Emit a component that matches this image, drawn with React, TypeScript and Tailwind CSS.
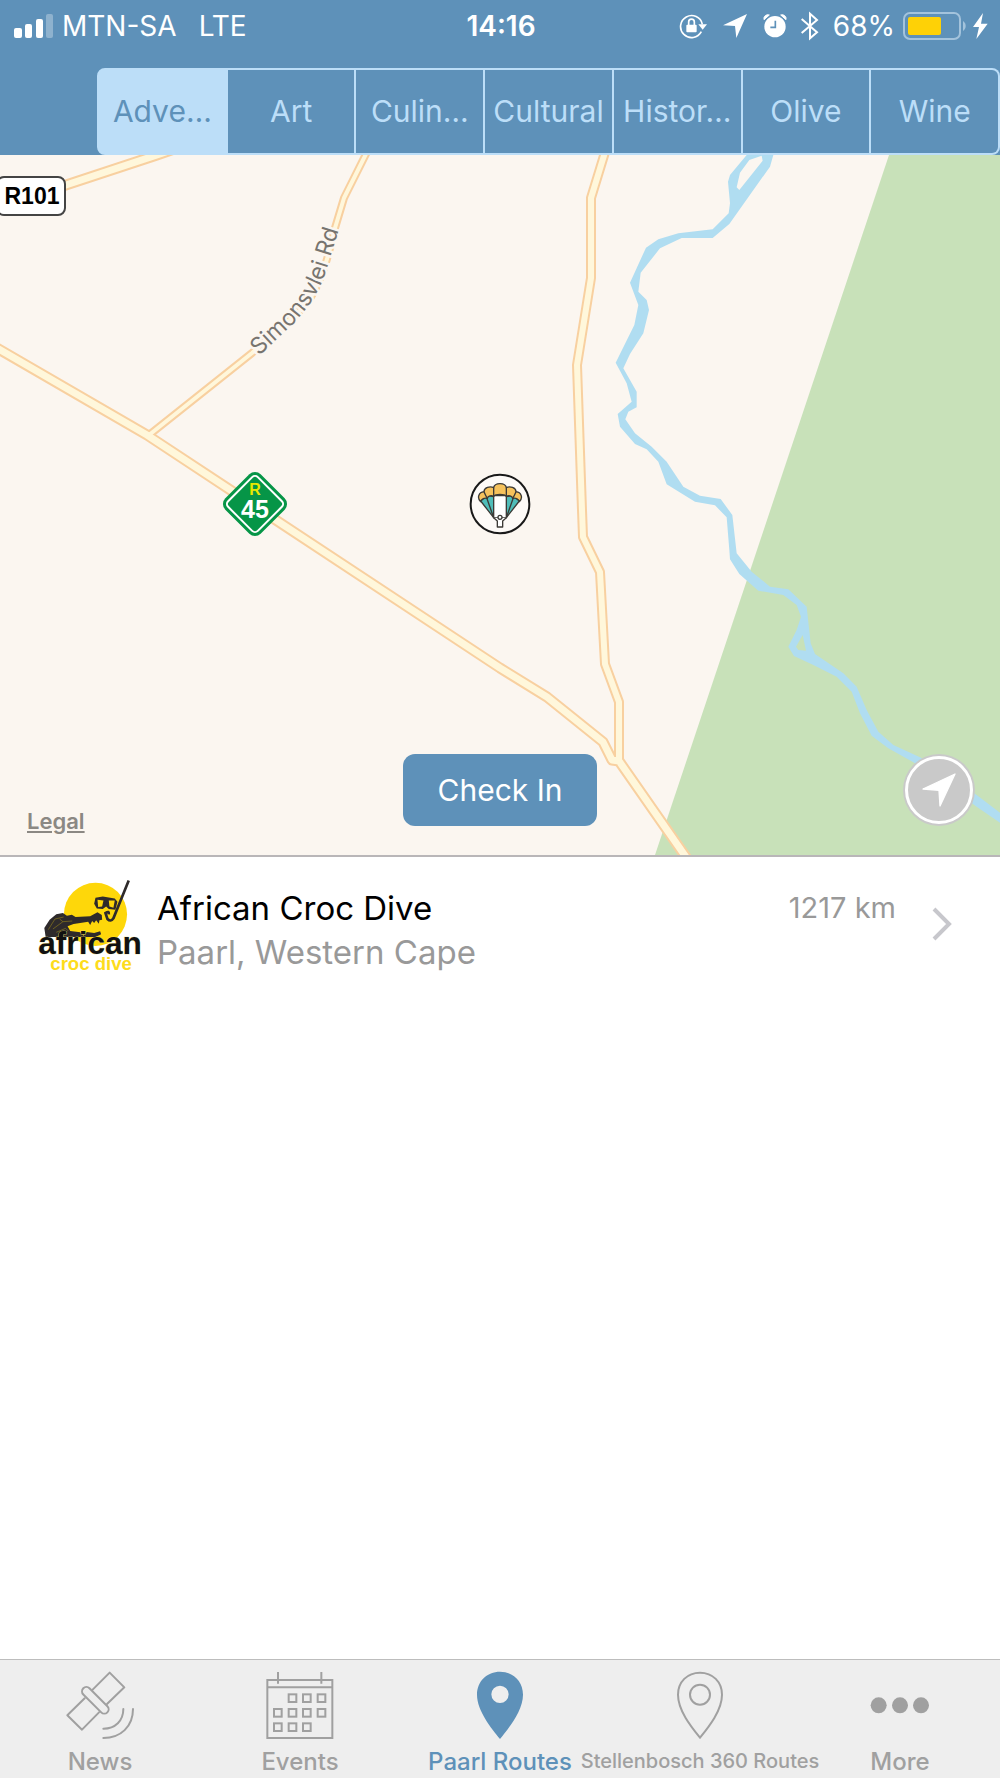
import React, { useState } from 'react';

const routes = [
  { label: 'Adve…', title: 'Adventure' },
  { label: 'Art', title: 'Art' },
  { label: 'Culin…', title: 'Culinary' },
  { label: 'Cultural', title: 'Cultural' },
  { label: 'Histor…', title: 'Historical' },
  { label: 'Olive', title: 'Olive' },
  { label: 'Wine', title: 'Wine' },
];

const StatusBar: React.FC = () => (
  <div className="grid h-[52px] grid-cols-[1fr_auto_1fr] items-center pr-3 pl-3.5 text-[28px] leading-8 text-white">
    <div className="flex items-center">
      <svg className="mr-2 h-6 w-10" viewBox="0 0 40 24" fill="currentColor">
        <rect x="0" y="14" width="8" height="10" rx="2" />
        <rect x="11" y="10" width="7" height="14" rx="2" />
        <rect x="22" y="5" width="7" height="19" rx="2" />
        <rect x="32" y="0" width="7" height="24" rx="2" opacity="0.3" />
      </svg>
      <span>MTN-SA</span>
      <span className="ml-[22px]">LTE</span>
    </div>
    <div className="font-semibold">14:16</div>
    <div className="flex items-center justify-end">
      {/* Rotation lock */}
      <svg className="mr-4 h-[26px] w-7" viewBox="0 0 84 78" fill="none" stroke="currentColor" strokeWidth="5">
        <path d="M70 34A33 33 0 1 0 67 56" />
        <path d="M58 34h26L71 50z" fill="currentColor" stroke="none" />
        <rect x="22" y="35" width="31" height="23" rx="3" fill="currentColor" stroke="none" />
        <path d="M29 36v-9a8 8 0 0 1 17 0v9" />
      </svg>
      <svg className="mr-4 h-6 w-6" viewBox="0 0 72 72" fill="currentColor">
        <path d="M72 0L40 72L36 36L0 34z" />
      </svg>
      {/* Alarm */}
      <svg className="mr-3.5 h-6 w-6" viewBox="0 0 72 72">
        <circle cx="36" cy="38" r="32" fill="currentColor" />
        <path d="M3 17A12 12 0 0 1 19 3L3 17zM69 17A12 12 0 0 0 53 3z" fill="currentColor" stroke="currentColor" strokeWidth="3" />
        <path d="M37 20v20H22" fill="none" stroke="#5e91b9" strokeWidth="5" />
      </svg>
      <svg className="mr-3.5 h-[30px] w-[18px]" viewBox="0 0 54 90" fill="none" stroke="currentColor" strokeWidth="6">
        <path d="M2 24L48 64L27 82V8L48 27L2 66" />
      </svg>
      <span>68%</span>
      <svg className="ml-2 h-7 w-16" viewBox="0 0 64 28">
        <rect x="1" y="1" width="56" height="26" rx="6" fill="none" stroke="#a3c3dc" strokeWidth="2" />
        <path d="M60 9a6 6 0 0 1 0 10z" fill="#a3c3dc" />
        <rect x="5" y="5" width="33" height="18" rx="2" fill="#fed106" />
      </svg>
      <svg className="ml-1.5 h-[26px] w-[15px]" viewBox="0 0 45 78" fill="currentColor">
        <path d="M30 0L0 42h18L10 78L44 32H24z" />
      </svg>
    </div>
  </div>
);

const RouteMap: React.FC = () => {
  const roads = [
    { d: 'M368 -5L344 43L335 73Q322 133 302 154L252 198L149 280', width: 8 },
    { d: 'M-10 54L66 30L157 0L180 -8', width: 11 },
    { d: 'M606 -6L591 43V123L577 210L582 355L583 382L600 417L605 509L619 547V607', width: 10 },
    { d: 'M-10 189L147 280L500 513L547 542L603 587L612 605L619 606L688 705', width: 11 },
  ];

  return (
    <svg className="absolute inset-0 h-full w-full" viewBox="0 0 1000 700" preserveAspectRatio="xMidYMid slice">
      <rect width="1000" height="700" fill="#fbf6f0" />
      <path d="M889 0H1000V700H655z" fill="#c8e1b9" />

      {/* River */}
      <g transform="translate(500 -5) scale(0.33333)">
        <path
          fill="#b0ddf1"
          fillRule="evenodd"
          d="M740 15L690 75L684 95L690 160L686 190L638 238L535 250L475 268L438 293L390 398L415 465L403 525L347 638L380 700L395 755L353 792L360 830L405 882L440 898L475 935L500 1003L585 1055L645 1066L680 1102L688 1200L690 1228L718 1272L775 1322L850 1335L890 1365L903 1400L890 1440L865 1490L882 1518L940 1545L1010 1580L1055 1625L1080 1690L1115 1757L1165 1795L1240 1837L1320 1890L1430 1970L1500 2018V1988L1430 1935L1340 1870L1260 1822L1180 1785L1135 1745L1100 1680L1070 1610L1030 1570L945 1512L932 1480L920 1370L865 1318L810 1310L755 1265L710 1210L697 1095L662 1047L600 1037L550 1010L500 935L455 890L405 850L376 808L385 785L410 772V725L370 655L390 612L430 550L447 480L440 450L415 425L422 368L480 295L545 264H638L688 222L810 50L820 15zM748 30L785 17L788 32L718 120L710 112L720 68zM908 1455L888 1490L895 1500L918 1502z"
        />
      </g>

      {roads.map((road) => (
        <path key={road.d} d={road.d} fill="none" stroke="#f8d0a0" strokeWidth={road.width} strokeLinejoin="round" />
      ))}
      {roads.map((road) => (
        <path key={road.d} d={road.d} fill="none" stroke="#fff7db" strokeWidth={road.width - 4} strokeLinejoin="round" />
      ))}

      <path id="simonsvlei" d="M259 201L290 172Q316 147 326 116L346 52" fill="none" />
      <text fontSize="23" fill="#77746f" stroke="#fbf6f0" strokeWidth="5" paintOrder="stroke">
        <textPath href="#simonsvlei">Simonsvlei Rd</textPath>
      </text>

      {/* Road shields */}
      <rect x="-3" y="22" width="68" height="38" rx="7" fill="#fff" stroke="#444" strokeWidth="2" />
      <text x="32" y="49" textAnchor="middle" fontSize="23" fontWeight="700" fill="#000" className="font-['Liberation_Sans']">
        R101
      </text>
      <g transform="translate(255 349)">
        <rect x="-25" y="-25" width="50" height="50" rx="8" transform="rotate(45)" fill="#069547" />
        <rect x="-21" y="-21" width="42" height="42" rx="4" transform="rotate(45)" fill="none" stroke="#fff" strokeWidth="2" />
        <text y="-9" textAnchor="middle" fontSize="16" fontWeight="700" fill="#e8e800" className="font-['Liberation_Sans']">
          R
        </text>
        <text y="14" textAnchor="middle" fontSize="25" fontWeight="700" fill="#fff" className="font-['Liberation_Sans']">
          45
        </text>
      </g>

      {/* Paragliding pin */}
      <svg x="460" y="310" width="80" height="80" viewBox="0 0 240 240">
        <circle cx="120" cy="117" r="88" fill="#fdfaf7" stroke="#191919" strokeWidth="6" />
        <g stroke="#3c3a36" strokeWidth="4" strokeLinejoin="round">
          <path d="M62 108L101 158V95L82 92zM178 108L139 158V95L158 92z" fill="#4fbdb9" />
          <path d="M80 98L101 158M160 98L139 158" fill="none" />
          <path d="M101 92H139V158H101z" fill="#fff" />
          <path d="M62 110C50 98 56 82 72 80C72 68 90 62 101 68C104 52 136 52 139 68C150 62 168 68 168 80C184 82 190 98 178 110C176 100 166 98 158 100C156 92 146 90 139 94C134 86 106 86 101 94C94 90 84 92 82 100C74 98 64 100 62 110z" fill="#f6c25c" />
          <path d="M72 80Q76 90 82 100M101 68V94M139 68V94M168 80Q164 90 158 100" fill="none" />
          <path d="M101 158L112 168V186H128V168L139 158" fill="#fff" />
          <circle cx="120" cy="157" r="6" fill="#fff" />
        </g>
      </svg>
    </svg>
  );
};

const CrocLogo: React.FC = () => (
  <svg className="h-[95px] w-[108px] shrink-0" viewBox="50 55 325 285">
    <circle cx="226" cy="164" r="95" fill="#fed70a" />
    {/* Crocodile */}
    <path
      d="M72 205L88 180L108 164L128 160L140 168L155 165L166 172L210 170L232 158L245 166L246 180L238 182L236 192L228 182L222 190L216 184L210 196L204 186L180 190L160 193L142 200L150 214L180 218L190 228L200 217L222 220L240 215L243 224L226 232H76z"
      fill="#2e2a2b"
    />
    <path d="M84 210L104 178L130 172M98 208L128 186L156 184M108 218L136 206L144 214M118 178L128 186" fill="none" stroke="#8c7a1c" strokeWidth="2" />
    {/* Mask and snorkel */}
    <path d="M226 114L248 110L284 116L292 126L286 150L266 148L258 140L248 148L230 146L222 132z" fill="#2e2a2b" />
    <path d="M232 120L250 122L246 140L234 142zM266 122L284 122L280 144L268 140z" fill="#fed70a" />
    <path d="M326 62L280 176Q272 188 262 178L256 160Q268 152 266 164" fill="none" stroke="#2e2a2b" strokeWidth="8" />
    <text x="54" y="284" fontSize="95" fontWeight="700" fill="#111" stroke="#f3e37a" strokeWidth="2" paintOrder="stroke" className="font-['Liberation_Sans']">
      african
    </text>
    <text x="90" y="331" fontSize="56" fontWeight="700" fill="#fddc1c" className="font-['Liberation_Sans']">
      croc dive
    </text>
  </svg>
);

const NewsIcon: React.FC = () => (
  <svg className="h-[70px] w-[70px]" viewBox="195 60 210 210" fill="none" stroke="currentColor" strokeWidth="6" strokeLinejoin="round" strokeLinecap="round">
    <path d="M278 119L329 68L373 112L321 162M254 145L202 196L246 239L297 187" />
    <rect x="235" y="138" width="102" height="26" rx="13" transform="rotate(45 286 151)" />
    <path d="M370 177C370 212 346 236 310 236M399 177C399 230 362 264 310 264" />
  </svg>
);

const EventsIcon: React.FC = () => {
  const days = [
    [868, 133], [911, 133], [955, 133],
    [824, 177], [868, 177], [911, 177], [955, 177],
    [824, 220], [868, 220], [911, 220],
  ];
  return (
    <svg className="h-[70px] w-[70px]" viewBox="797 60 210 210" fill="none" stroke="currentColor" strokeWidth="6">
      <path d="M804 90H999V264H804zM804 112H999M836 66V101M966 66V101" />
      {days.map(([x, y]) => (
        <rect key={`${x}-${y}`} x={x} y={y} width="23" height="23" />
      ))}
    </svg>
  );
};

const PinIcon: React.FC<{ filled?: boolean }> = ({ filled }) => (
  <svg className="h-[70px] w-[70px]" viewBox="0 0 210 210" fill="none" stroke="currentColor" strokeWidth="6">
    {filled ? (
      <path
        fill="currentColor"
        stroke="none"
        fillRule="evenodd"
        d="M105 207C80 176 36 122 36 74C36 34 66 5 105 5S174 34 174 74C174 122 130 176 105 207zM105 47a26 26 0 1 0 0 52a26 26 0 1 0 0-52z"
      />
    ) : (
      <>
        <path d="M105 203C80 172 39 122 39 74C39 36 67 8 105 8S171 36 171 74C171 122 130 172 105 203z" />
        <circle cx="105" cy="74" r="30" />
      </>
    )}
  </svg>
);

const MoreIcon: React.FC = () => (
  <svg className="h-[70px] w-[70px]" viewBox="0 0 210 210" fill="currentColor">
    <circle cx="41" cy="106" r="24" />
    <circle cx="105" cy="106" r="24" />
    <circle cx="168" cy="106" r="24" />
  </svg>
);

const tabs = [
  { label: 'News', icon: <NewsIcon />, size: 'text-[24px]' },
  { label: 'Events', icon: <EventsIcon />, size: 'text-[24px]' },
  { label: 'Paarl Routes', icon: <PinIcon filled />, size: 'text-[24px]', active: true },
  { label: 'Stellenbosch 360 Routes', icon: <PinIcon />, size: 'text-[20px]' },
  { label: 'More', icon: <MoreIcon />, size: 'text-[24px]' },
];

export default function App() {
  const [selected, setSelected] = useState(0);

  return (
    <div className="flex min-h-screen flex-col bg-white font-['Inter',sans-serif]">
      <header className="bg-[#5e91b9]">
        <StatusBar />
        <div className="pt-4 pl-[97px]">
          <div className="flex h-[87px]">
            {routes.map((route, index) => (
              <button
                key={route.title}
                type="button"
                title={route.title}
                onClick={() => setSelected(index)}
                className={`min-w-0 flex-1 border-y-2 border-r-2 border-[#bcdef8] text-center text-[30px] whitespace-nowrap first:rounded-l-lg first:border-l-2 last:rounded-r-lg ${
                  selected === index ? 'bg-[#bcdef8] text-[#5e91b9]' : 'text-[#bcdef8]'
                }`}
              >
                {route.label}
              </button>
            ))}
          </div>
        </div>
      </header>

      <main className="flex-1">
        <section className="relative aspect-[10/7] w-full overflow-hidden">
          <RouteMap />
          <a href="#legal" className="absolute bottom-5 left-[27px] text-[22px] leading-7 font-semibold text-[#8b8883] underline">
            Legal
          </a>
          <button
            type="button"
            className="absolute bottom-[29px] left-1/2 h-[72px] w-[194px] -translate-x-1/2 rounded-xl bg-[#5e91b9] text-[30px] text-white"
          >
            Check In
          </button>
          <button
            type="button"
            aria-label="My location"
            className="absolute right-[27px] bottom-[31px] flex h-[68px] w-[68px] items-center justify-center rounded-full border-3 border-white bg-[#c9c9c9] ring-2 ring-[#c9c9c9]"
          >
            <svg className="h-[34px] w-[34px]" viewBox="0 0 102 102" fill="#fff" stroke="#fff" strokeWidth="4" strokeLinejoin="round">
              <path d="M99 3L54 99L51 52L3 48z" />
            </svg>
          </button>
        </section>

        <a href="#african-croc-dive" className="flex items-start border-t-2 border-[#b9b6b8] pt-[21px] pr-12 pb-4 pl-[37px]">
          <CrocLogo />
          <div className="ml-3 flex-1 pt-2 text-[33px] leading-[44px]">
            <div className="text-black">African Croc Dive</div>
            <div className="text-[#999]">Paarl, Western Cape</div>
          </div>
          <div className="mr-9 pt-2 text-[29px] leading-[44px] text-[#999]">1217 km</div>
          <svg className="mt-7 h-9 w-5" viewBox="0 0 20 36" fill="none" stroke="#c7c7cc" strokeWidth="4">
            <path d="M2 3L17 18L2 33" />
          </svg>
        </a>
      </main>

      <nav className="grid h-[119px] grid-cols-5 border-t border-[#bdbdbd] bg-[#eeeeee]">
        {tabs.map((tab) => (
          <a
            key={tab.label}
            href="#tab"
            className={`flex flex-col items-center pt-2.5 font-medium whitespace-nowrap ${
              tab.active ? 'text-[#5e91b9]' : 'text-[#a0a0a0]'
            }`}
          >
            {tab.icon}
            <span className={`leading-[43px] ${tab.size}`}>{tab.label}</span>
          </a>
        ))}
      </nav>
    </div>
  );
}
